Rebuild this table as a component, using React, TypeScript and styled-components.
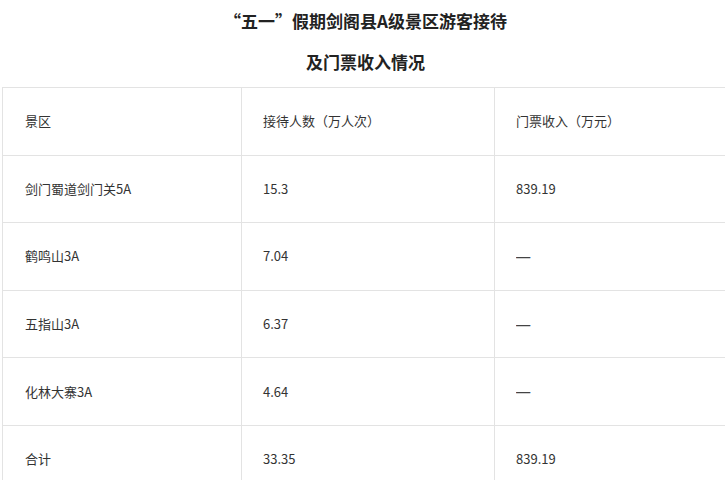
import React from "react";
import styled, { createGlobalStyle } from "styled-components";

const GlobalStyle = createGlobalStyle`
	html, body {
		margin: 0;
		padding: 0;
		background: #fff;
		overflow: hidden;
	}
	body {
		font-family: "Noto Sans CJK SC", "Noto Sans", sans-serif;
		color: #333;
	}
`;

const Page = styled.div`
	width: 725px;
`;

const Title = styled.h1`
	margin: 0;
	text-align: center;
	font-size: 17px;
	font-weight: 700;
	color: #222;
	line-height: 41px;
	padding-left: 6px;
`;

const Table = styled.table`
	margin-left: 2px;
	margin-top: 5px;
	width: 745px;
	border-collapse: collapse;
	table-layout: fixed;
`;

const Cell = styled.td<{ $w?: number }>`
	${(p) => (p.$w ? `width: ${p.$w}px;` : "")}
	height: 67.6px;
	box-sizing: border-box;
	border: 1px solid #e3e3e3;
	padding: 0 0 0 21px;
	font-size: 13px;
	color: #333;
	vertical-align: middle;
	line-height: 20px;
	&:first-child {
		padding-left: 22px;
	}
`;

const Dash = styled.span`
	display: inline-block;
	font-family: "Liberation Sans", sans-serif;
	font-weight: 700;
	transform: scaleX(1.1);
	transform-origin: left center;
	color: #444;
`;

const rows: [string, string, string][] = [
	["景区", "接待人数（万人次）", "门票收入（万元）"],
	["剑门蜀道剑门关5A", "15.3", "839.19"],
	["鹤鸣山3A", "7.04", "—"],
	["五指山3A", "6.37", "—"],
	["化林大寨3A", "4.64", "—"],
	["合计", "33.35", "839.19"],
];

export default function App() {
	return (
		<Page>
			<GlobalStyle />
			<Title>
				“五一”假期剑阁县A级景区游客接待
				<br />
				及门票收入情况
			</Title>
			<Table>
				<tbody>
					{rows.map((r, i) => (
						<tr key={i}>
							<Cell $w={i === 0 ? 239 : undefined}>{r[0]}</Cell>
							<Cell $w={i === 0 ? 253 : undefined}>{r[1]}</Cell>
							<Cell>{r[2] === "—" ? <Dash>—</Dash> : r[2]}</Cell>
						</tr>
					))}
				</tbody>
			</Table>
		</Page>
	);
}
